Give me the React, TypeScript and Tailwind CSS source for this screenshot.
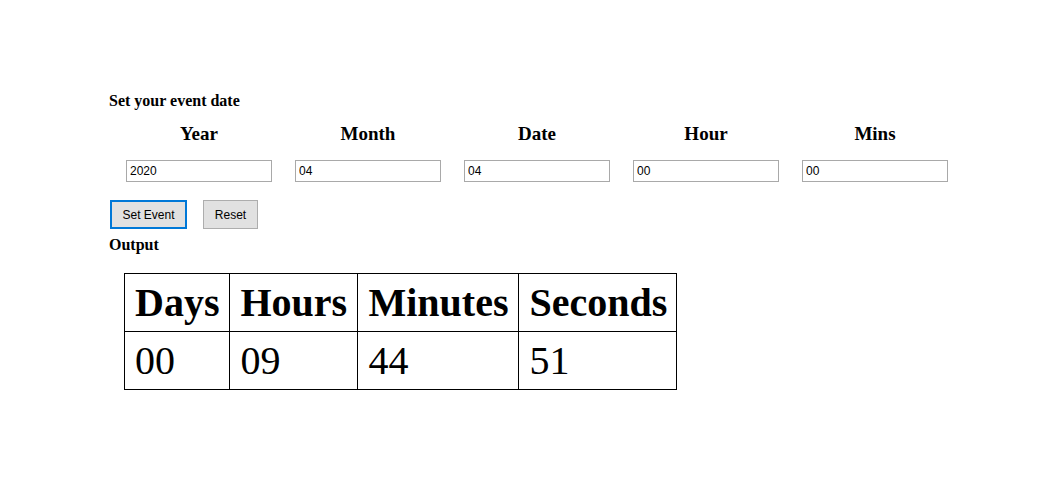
import { useState } from "react";

const fields = [
  { label: "Year", value: "2020" },
  { label: "Month", value: "04" },
  { label: "Date", value: "04" },
  { label: "Hour", value: "00" },
  { label: "Mins", value: "00" },
];

const cols = [
  { head: "Days", value: "00", w: "w-[105px] px-[10px]" },
  { head: "Hours", value: "09", w: "w-[128px] px-[10px]" },
  { head: "Minutes", value: "44", w: "w-[161px] px-[10px]" },
  { head: "Seconds", value: "51", w: "w-[158px] pl-[10px] pr-[8px]" },
];

export default function App() {
  const [vals, setVals] = useState(fields.map((f) => f.value));

  return (
    <div className="min-h-[504px] w-[1052px] bg-white pl-[109px] pt-[92px] font-['Liberation_Serif',serif] text-black">
      <h4 className="text-[16px] font-bold leading-[18px]">Set your event date</h4>

      {/* date fields */}
      <div className="mt-[13px] flex gap-[23px] pl-[17px]">
        {fields.map((f, i) => (
          <div key={f.label} className="flex w-[146px] flex-col items-center">
            <h3 className="text-[19px] font-bold leading-[22px]">{f.label}</h3>
            <input
              className="mt-[15px] h-[22px] w-[146px] border border-[#a9a9a9] px-[3px] font-['Liberation_Sans',sans-serif] text-[12px] outline-none"
              value={vals[i]}
              onChange={(e) => {
                const next = [...vals];
                next[i] = e.target.value;
                setVals(next);
              }}
            />
          </div>
        ))}
      </div>

      <div className="mt-[18px] flex gap-[16px] pl-[1px] font-['Liberation_Sans',sans-serif] text-[12px]">
        <button className="h-[29px] w-[77px] border-2 border-[#0078d7] bg-[#e1e1e1]">Set Event</button>
        <button className="h-[29px] w-[55px] border border-[#adadad] bg-[#e1e1e1]">Reset</button>
      </div>

      <h4 className="mt-[7px] text-[16px] font-bold leading-[18px]">Output</h4>

      <table className="ml-[15px] mt-[19px] border-collapse">
        <thead>
          <tr>
            {cols.map((c) => (
              <th key={c.head} className={`${c.w} h-[58px] border border-black text-left text-[40px] font-bold leading-[46px]`}>
                {c.head}
              </th>
            ))}
          </tr>
        </thead>
        <tbody>
          <tr>
            {cols.map((c) => (
              <td key={c.head} className={`${c.w} h-[58px] border border-black text-left text-[40px] leading-[46px]`}>
                {c.value}
              </td>
            ))}
          </tr>
        </tbody>
      </table>
    </div>
  );
}
